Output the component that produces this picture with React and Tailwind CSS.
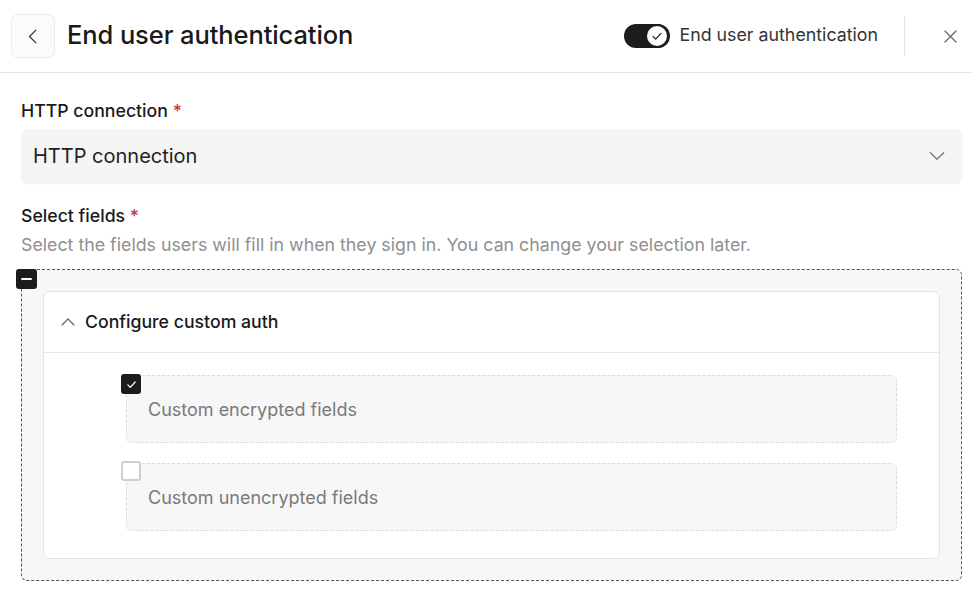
import React from "react";

const font = { fontFamily: "Inter, 'Noto Sans', sans-serif" };

function Chevron({ dir = "down", className = "" }) {
  const d =
    dir === "down"
      ? "M4 8l8 8 8-8"
      : dir === "up"
      ? "M4 16l8-8 8 8"
      : "M15 4l-8 8 8 8";
  return (
    <svg viewBox="0 0 24 24" className={className} fill="none" stroke="currentColor" strokeWidth="1.6" strokeLinecap="round" strokeLinejoin="round">
      <path d={d} />
    </svg>
  );
}

function Item({ checked, label }) {
  return (
    <div className="relative ml-[82px] mr-[42px]">
      <div className="h-[68px] flex items-center pl-[21px] rounded-md border border-dashed border-[#dcdcdc] bg-[#f7f7f7] text-[18px] text-[#7a7a7a]">
        {label}
      </div>
      {checked ? (
        <div className="absolute left-[-5px] top-[-1px] w-[20px] h-[20px] rounded-[3px] bg-[#1c1c1c] flex items-center justify-center">
          <svg viewBox="0 0 16 16" className="w-[13px] h-[13px]" fill="none" stroke="white" strokeWidth="1.6" strokeLinecap="round" strokeLinejoin="round">
            <path d="M3.5 8.5l3 3 6-6.5" />
          </svg>
        </div>
      ) : (
        <div className="absolute left-[-5px] top-[-2px] w-[20px] h-[20px] rounded-[3px] bg-white border-2 border-[#cfcfcf]" />
      )}
    </div>
  );
}

export default function App() {
  return (
    <div style={font} className="w-[972px] h-[590px] bg-white overflow-hidden text-[#1a1a1a]">
      {/* Header */}
      <div className="h-[73px] border-b border-[#e3e3e3] flex items-center pl-[11px] pr-[12px]">
        <div className="w-[44px] h-[44px] rounded-[7px] border border-[#ececec] bg-[#fbfbfb] flex items-center justify-center text-[#333]">
          <Chevron dir="left" className="w-[19px] h-[19px]" />
        </div>
        <div className="ml-[12px] mb-[2px] text-[25.5px] font-medium tracking-[-0.1px]">End user authentication</div>
        <div className="flex-1" />
        <div className="w-[46px] h-[24px] rounded-full bg-[#1c1c1c] relative flex items-center">
          <div className="absolute right-[1px] w-[24px] h-[24px] rounded-full bg-white border-2 border-[#1c1c1c] flex items-center justify-center">
            <svg viewBox="0 0 16 16" className="w-[14px] h-[14px]" fill="none" stroke="#1c1c1c" strokeWidth="1.4" strokeLinecap="round" strokeLinejoin="round">
              <path d="M3.5 8.5l3 3 6-6.5" />
            </svg>
          </div>
        </div>
        <div className="ml-[10px] mb-[2px] text-[17.8px] text-[#333]">End user authentication</div>
        <div className="ml-[26px] w-px h-[38px] bg-[#e3e3e3]" />
        <div className="ml-[36px] text-[#666]">
          <svg viewBox="0 0 24 24" className="w-[19px] h-[19px]" fill="none" stroke="currentColor" strokeWidth="1.6" strokeLinecap="round">
            <path d="M5 5l14 14M19 5L5 19" />
          </svg>
        </div>
      </div>

      {/* Body */}
      <div className="pl-[21px] pr-[10px] pt-[26px]">
        <div className="text-[17.7px] font-medium leading-[24px]">
          HTTP connection <span className="text-[#c8324a]">*</span>
        </div>
        <div className="mt-[6px] h-[54px] rounded-[7px] bg-[#f5f5f5] shadow-[0_1px_2px_rgba(0,0,0,0.06)] flex items-center pl-[12px] pr-[15px]">
          <div className="text-[20px] text-[#222] flex-1">HTTP connection</div>
          <Chevron dir="down" className="w-[20px] h-[20px] text-[#777]" />
        </div>

        <div className="mt-[21px] text-[17.7px] font-medium leading-[24px]">
          Select fields <span className="text-[#c8324a]">*</span>
        </div>
        <div className="mt-[5px] text-[17.8px] text-[#8f8f8f] leading-[24px]">
          Select the fields users will fill in when they sign in. You can change your selection later.
        </div>

        <div className="relative mt-[12px] rounded-[6px] border border-dashed border-[#555] bg-[#f7f7f7] p-[21px]">
          <div className="absolute left-[-6px] top-[-1px] w-[21px] h-[20px] rounded-[3px] bg-[#1c1c1c] flex items-center justify-center">
            <div className="w-[11px] h-[2px] bg-white rounded" />
          </div>
          <div className="rounded-[7px] border border-[#e3e3e3] bg-white">
            <div className="h-[61px] flex items-center pl-[15px] border-b border-[#e6e6e6]">
              <Chevron dir="up" className="w-[18px] h-[18px] text-[#666]" />
              <span className="ml-[8px] text-[17.7px] font-medium text-[#1a1a1a]">Configure custom auth</span>
            </div>
            <div className="pt-[22px] pb-[27px] flex flex-col gap-[20px]">
              <Item checked label="Custom encrypted fields" />
              <Item label="Custom unencrypted fields" />
            </div>
          </div>
        </div>
      </div>
    </div>
  );
}
